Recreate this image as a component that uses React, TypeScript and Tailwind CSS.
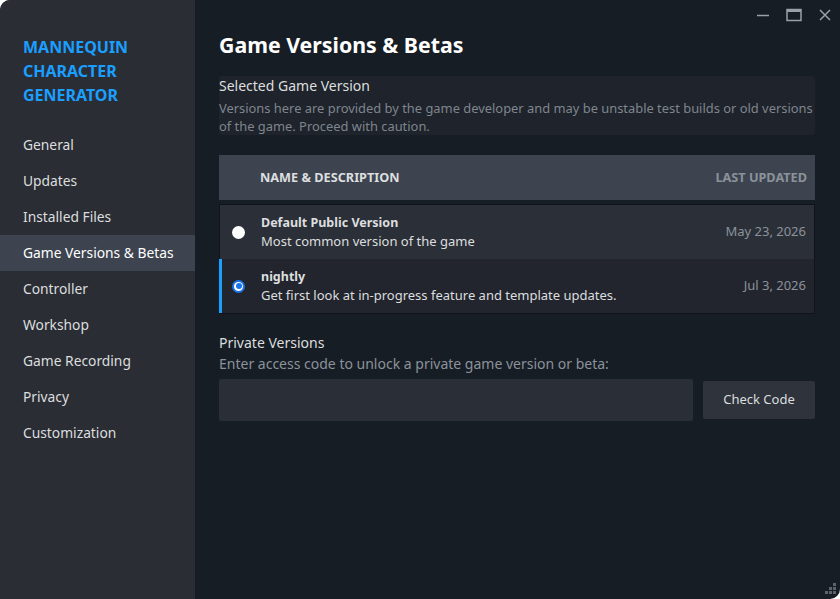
import { useState } from 'react'

const navItems = [
  'General',
  'Updates',
  'Installed Files',
  'Game Versions & Betas',
  'Controller',
  'Workshop',
  'Game Recording',
  'Privacy',
  'Customization',
]

const versions = [
  { key: 'public', name: 'Default Public Version', desc: 'Most common version of the game', date: 'May 23, 2026' },
  { key: 'nightly', name: 'nightly', desc: 'Get first look at in-progress feature and template updates.', date: 'Jul 3, 2026' },
]

export default function App() {
  const [selected, setSelected] = useState('nightly')
  const [active] = useState('Game Versions & Betas')

  return (
    <div className="w-[840px] h-[599px] bg-white overflow-hidden" style={{ fontFamily: '"Noto Sans", "Open Sans", sans-serif' }}>
      <div className="relative flex w-full h-full bg-[#171d25] rounded-tl-[10px] rounded-br-[10px] overflow-hidden">
        {/* サイドバー */}
        <aside className="w-[195px] shrink-0 bg-[#2a2d34] flex flex-col pt-[35px]">
          <h1 className="px-[23px] text-[16px] leading-[24px] font-bold text-[#1a9fff]">
            MANNEQUIN
            <br />
            CHARACTER
            <br />
            GENERATOR
          </h1>
          <nav className="mt-[20px] flex flex-col">
            {navItems.map((item) => (
              <div
                key={item}
                className={
                  'h-[36px] flex items-center pl-[23px] text-[13.8px] text-[#dcdedf] whitespace-nowrap ' +
                  (item === active ? 'bg-[#3d4450] text-white' : '')
                }
              >
                {item}
              </div>
            ))}
          </nav>
        </aside>

        {/* メイン */}
        <main className="flex-1 pl-[24px] pr-[25px] pt-[30px]">
          <h2 className="text-[21.3px] leading-[30px] font-bold text-white">Game Versions &amp; Betas</h2>

          <section className="mt-[16px] bg-[#1f232b] rounded-[3px]">
            <div className="text-[14px] leading-[20px] text-[#dcdedf]">Selected Game Version</div>
            <p className="mt-[3px] text-[12.9px] leading-[18px] text-[#7e858e]">
              Versions here are provided by the game developer and may be unstable test builds or old versions of the game. Proceed with caution.
            </p>
          </section>

          <div className="mt-[20px]">
            <div className="h-[45px] bg-[#3d4450] flex items-center pl-[41px] pr-[8px] text-[12.7px] font-bold">
              <span className="flex-1 text-[#dcdedf]">NAME &amp; DESCRIPTION</span>
              <span className="text-[#8b929a]">LAST UPDATED</span>
            </div>
            <div className="mt-[4px] border border-[#10131a]">
              {versions.map((v, i) => {
                const isSel = selected === v.key
                return (
                  <div
                    key={v.key}
                    onClick={() => setSelected(v.key)}
                    className={
                      'relative h-[54px] flex items-center pr-[8px] cursor-pointer ' +
                      (i === 0 ? 'bg-[#2b2f38]' : 'bg-[#22252d]')
                    }
                  >
                    {isSel && <div className="absolute left-[-1px] top-0 bottom-0 w-[3px] bg-[#1a9fff]" />}
                    <div className="w-[41px] flex justify-center pr-[4px]">
                      {isSel ? (
                        <div className="w-[13px] h-[13px] rounded-full bg-[#1a73e8] flex items-center justify-center">
                          <div className="w-[9px] h-[9px] rounded-full bg-white flex items-center justify-center">
                            <div className="w-[6px] h-[6px] rounded-full bg-[#1a73e8]" />
                          </div>
                        </div>
                      ) : (
                        <div className="w-[13px] h-[13px] rounded-full bg-white" />
                      )}
                    </div>
                    <div className="flex-1">
                      <div className="text-[12.5px] leading-[18px] font-bold text-[#dcdedf]">{v.name}</div>
                      <div className="text-[13px] leading-[19px] text-[#dcdedf]">{v.desc}</div>
                    </div>
                    <div className="text-[13px] text-[#8b929a]">{v.date}</div>
                  </div>
                )
              })}
            </div>
          </div>

          <section className="mt-[19px]">
            <div className="text-[14px] leading-[20px] text-[#dcdedf]">Private Versions</div>
            <div className="mt-[1px] text-[14px] leading-[20px] text-[#8b929a]">Enter access code to unlock a private game version or beta:</div>
            <div className="mt-[5px] flex items-center gap-[10px]">
              <input className="flex-1 h-[42px] bg-[#2a2e37] rounded-[2px] outline-none px-3 text-[14px] text-white" />
              <button className="w-[112px] h-[38px] bg-[#2e333c] rounded-[2px] text-[13px] text-[#dcdedf]">Check Code</button>
            </div>
          </section>
        </main>

        {/* ウィンドウ操作 */}
        <div className="absolute top-[8px] right-[8px] flex items-center gap-[16px] text-[#9aa0a7]">
          <svg width="14" height="14" viewBox="0 0 14 14"><path d="M1 7.5h12" stroke="currentColor" strokeWidth="1.5" /></svg>
          <svg width="16" height="14" viewBox="0 0 16 14"><rect x="1" y="1.5" width="14" height="11" fill="none" stroke="currentColor" strokeWidth="1.5" /><path d="M1 3h14" stroke="currentColor" strokeWidth="2" /></svg>
          <svg width="14" height="14" viewBox="0 0 14 14"><path d="M2 2l10 10M12 2L2 12" stroke="currentColor" strokeWidth="1.5" /></svg>
        </div>

        {/* リサイズグリップ */}
        <svg className="absolute right-[3px] bottom-[3px]" width="14" height="14" viewBox="0 0 14 14" fill="#5d636c">
          <rect x="10" y="1" width="3" height="3" />
          <rect x="6" y="5" width="3" height="3" />
          <rect x="10" y="5" width="3" height="3" />
          <rect x="2" y="9" width="3" height="3" />
          <rect x="6" y="9" width="3" height="3" />
          <rect x="10" y="9" width="3" height="3" />
        </svg>
      </div>
    </div>
  )
}
